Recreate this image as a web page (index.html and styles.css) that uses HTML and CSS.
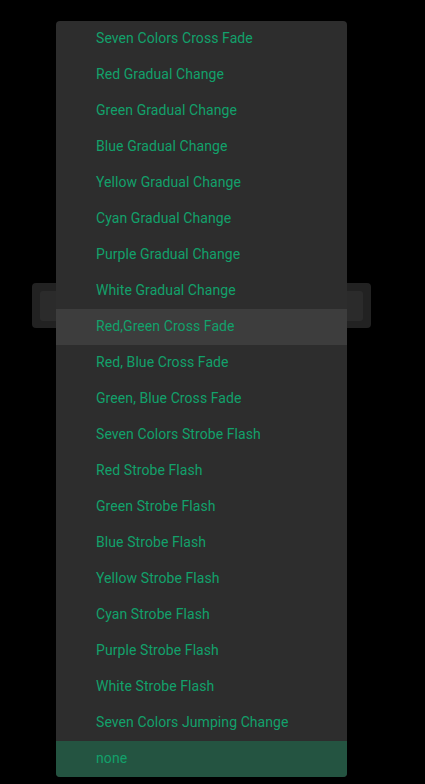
FILE: index.html
```html
<!DOCTYPE html>
<html>
<head>
<meta charset="utf-8">
<link rel="stylesheet" href="styles.css">
</head>
<body>
<div class="page">
  <div class="panel">
    <div class="field"></div>
  </div>
  <ul class="menu">
    <li class="item">Seven Colors Cross Fade</li>
    <li class="item">Red Gradual Change</li>
    <li class="item">Green Gradual Change</li>
    <li class="item">Blue Gradual Change</li>
    <li class="item">Yellow Gradual Change</li>
    <li class="item">Cyan Gradual Change</li>
    <li class="item">Purple Gradual Change</li>
    <li class="item">White Gradual Change</li>
    <li class="item hover">Red,Green Cross Fade</li>
    <li class="item">Red, Blue Cross Fade</li>
    <li class="item">Green, Blue Cross Fade</li>
    <li class="item">Seven Colors Strobe Flash</li>
    <li class="item">Red Strobe Flash</li>
    <li class="item">Green Strobe Flash</li>
    <li class="item">Blue Strobe Flash</li>
    <li class="item">Yellow Strobe Flash</li>
    <li class="item">Cyan Strobe Flash</li>
    <li class="item">Purple Strobe Flash</li>
    <li class="item">White Strobe Flash</li>
    <li class="item">Seven Colors Jumping Change</li>
    <li class="item selected">none</li>
  </ul>
</div>
</body>
</html>
```
FILE: styles.css
```css
* { box-sizing: border-box; }
html, body {
  margin: 0;
  padding: 0;
  background: #000;
  width: 425px;
  height: 784px;
  overflow: hidden;
}
.page {
  position: relative;
  width: 425px;
  height: 784px;
  padding: 283px 54px 0 32px;
  font-family: Roboto, "Noto Sans", sans-serif;
}
.panel {
  height: 45px;
  background: #222222;
  border-radius: 4px;
  padding: 8px;
}
.field {
  height: 30px;
  background: #2b2b2b;
  border-radius: 3px;
}
.menu {
  position: absolute;
  left: 56px;
  top: 21px;
  width: 291px;
  margin: 0;
  padding: 0;
  list-style: none;
  background: #2d2d2d;
  border-radius: 4px;
  overflow: hidden;
}
.item {
  height: 36px;
  line-height: 34px;
  padding: 0 0 2px 40px;
  font-size: 14px;
  letter-spacing: 0.08px;
  color: #12a16b;
  white-space: nowrap;
}
.item.hover { background: #3d3d3d; }
.item.selected { background: #245441; }
```
